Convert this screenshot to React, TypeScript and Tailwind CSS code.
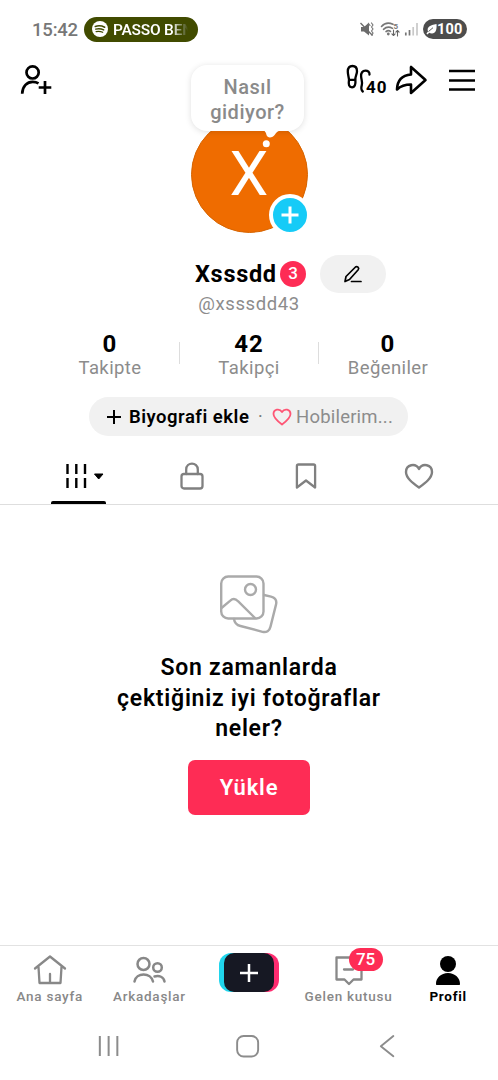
import React from "react";

const stroke = {
  fill: "none",
  stroke: "currentColor",
  strokeLinecap: "round" as const,
  strokeLinejoin: "round" as const,
};

function StatusBar() {
  return (
    <div className="flex h-[58px] shrink-0 items-center justify-between pr-[31px] pl-[32px]">
      <div className="flex items-center">
        <span className="w-[52px] pt-[2px] text-[18.5px] leading-6 font-medium tracking-[-.2px] whitespace-nowrap text-[#777]">15:42</span>
        <div className="flex h-[25px] w-[114px] items-center rounded-full bg-[#414b00] pl-[8px]">
          <svg width="16" height="16" viewBox="0 0 16 16" className="shrink-0">
            <circle cx="8" cy="8" r="8" fill="#fff" />
            <g fill="none" stroke="#414b00" strokeLinecap="round">
              <path d="M3.3 5.4c3.3-1 6.600-.6 9.400.8" strokeWidth="1.6" />
              <path d="M3.700 8.100c2.900-.8 5.600-.4 8 .8" strokeWidth="1.4" />
              <path d="M4.100 10.600c2.400-.6 4.600-.3 6.600.7" strokeWidth="1.2" />
            </g>
          </svg>
          <span className="ml-[5px] w-[75px] overflow-hidden bg-linear-to-r from-white from-78% to-[#414b00] bg-clip-text pt-px text-[15.500px] leading-5 font-semibold tracking-[-.25px] whitespace-nowrap text-transparent">
            PASSO BEN
          </span>
        </div>
      </div>
      <div className="flex items-center">
        <svg width="60" height="20" viewBox="0 0 60 20" className="mr-[4px]">
          <path d="M2 8h3l5-4.500v13L5 12.500H2z" fill="#6b6b6b" />
          <path d="M1.500 4l12 12.500" stroke="#6b6b6b" strokeWidth="1.300" />
          <path d="M12.500 4l1.500 2-1.500 2 1.500 2-1.500 2 1.500 2-1 2M9.500 4.500l1.500 2" {...stroke} stroke="#777" strokeWidth="1.200" />
          <path d="M22.500 7.500c3-3.500 7.500-4 11.500-2.200M24.500 10.300c2.600-2.500 6-2.800 9-.9M27 12.600c1.400-1.200 3.200-1.200 4.500-.2" {...stroke} stroke="#777" strokeWidth="1.600" />
          <circle cx="29.300" cy="15" r="1.400" fill="#777" />
          <text x="34.500" y="9.500" fill="#777" className="text-[8px] font-bold">5</text>
          <path d="M34.500 11v5.500m-1.600-1.700l1.600 1.700 1.600-1.700M38.500 17v-5.500m-1.600 1.700l1.600-1.700 1.600 1.700" {...stroke} stroke="#666" strokeWidth="1.100" />
          <path d="M46.800 13.500v3M50.500 11v5.500" stroke="#777" strokeWidth="1.700" />
          <path d="M54.200 8v8.500M58 4v12.500" stroke="#c8c8c8" strokeWidth="1.700" />
        </svg>
        <div className="flex h-[20px] w-[44px] items-center rounded-full bg-[#4d4d4d] pl-[3px]">
          <svg width="11" height="12" viewBox="0 0 11 12" className="shrink-0">
            <path d="M10.500 1c.5 6-1 9.300-4.500 9.500-1.300 0-2.200-.3-2.800-.8L1.500 11.500.4 10.500 2 8.600C.6 4 4 2 10.500 1z" fill="#fff" />
            <path d="M2.500 8.500L7 4.700" stroke="#4d4d4d" strokeWidth=".9" />
          </svg>
          <span className="pt-[2px] text-[14.500px] leading-5 font-bold tracking-[.2px] text-white">100</span>
        </div>
      </div>
    </div>
  );
}

function Header() {
  return (
    <header className="flex h-[197px] shrink-0 items-start justify-between">
      <div className="w-[191px] pt-[6px] pl-[20px]">
        <svg width="34" height="32" viewBox="0 0 34 32" {...stroke} strokeWidth="2.700" strokeLinecap="butt">
          <circle cx="12.600" cy="8.400" r="6.100" />
          <path d="M2.200 29.700c.2-7.800 5-11.800 10.500-11.800 2.500 0 4.300.6 5.800 1.500M25 17v13M18.700 23.500h12.600" />
        </svg>
      </div>
      <div className="relative mt-[58px] h-[117px] w-[117px] shrink-0">
        <div className="flex h-[117px] w-[117px] items-center justify-center rounded-full border border-[#d66400] bg-[#ef6c00]">
          <svg width="117" height="117" viewBox="0 0 117 117">
            <text x="58" y="79" textAnchor="middle" fill="#fff" className="font-[Roboto] text-[63px]">X</text>
          </svg>
        </div>
        <div className="absolute top-[-51px] left-0 flex h-[66px] w-[113px] items-center justify-center rounded-[16px] bg-white pt-[3px] text-center text-[20px] leading-[25px] font-medium tracking-[.5px] text-[#8a8a8a] shadow-[0_1px_6px_rgba(0,0,0,.13)]">
          Nasıl<br />gidiyor?
        </div>
        <svg className="absolute top-[14px] left-[70px]" width="24" height="18" viewBox="0 0 24 18" fill="#fff">
          <path d="M2 0h20c-5 1-6 1.500-8 4.500-2.300 3.500-7.500 4-8.500.5C5 2.500 4.500 1.500 2 0z" />
          <circle cx="5.300" cy="13.700" r="3.500" />
        </svg>
        <div className="absolute top-[78px] left-[78px] flex h-[42px] w-[42px] items-center justify-center rounded-full border-[4px] border-white bg-[#16cbf7]">
          <svg width="20" height="20" viewBox="0 0 20 20">
            <path d="M10 1.500v17M1.500 10h17" stroke="#fff" strokeWidth="3" />
          </svg>
        </div>
      </div>
      <div className="flex w-[190px] items-center pt-[6px] pl-[37px]">
        <svg width="44" height="32" viewBox="0 0 44 32" {...stroke} strokeWidth="2.300">
          <path d="M4 15.500C3.500 12 2.800 10 2.800 7.600c0-3.500 2-5.600 4.700-5.600s4.500 2.100 4.500 5.200c0 3.500-2 5-1.600 8.800.3 4-.4 7.300-3.400 7.300S3.300 21 4 15.500zM4.300 15.800h6" />
          <path d="M24.500 10.500c.2-2.300-1.600-3.900-4-3.900-3 0-4.700 2.300-4.400 5.800.3 3.800 1.600 5.700.7 8.700-.8 2.700-.3 5.300 1 6.400" />
          <text x="21" y="29" fill="currentColor" stroke="none" className="text-[17px] font-bold" textLength="20.500">40</text>
        </svg>
        <svg width="34" height="32" viewBox="0 0 34 32" className="ml-[6px]" fill="none" stroke="currentColor" strokeWidth="2.600" strokeLinejoin="round">
          <path d="M16 3v7.500C6.500 11.500 2.200 16.500 2 25.500c4-3.800 8-5 14-5v8.500l14.500-13z" />
        </svg>
        <svg width="28" height="24" viewBox="0 0 28 24" className="ml-[19px]">
          <path d="M1 3h26M1 12.500h26M1 21.500h26" stroke="currentColor" strokeWidth="2.500" />
        </svg>
      </div>
    </header>
  );
}

function Stat({ value, label }: { value: string; label: string }) {
  return (
    <div className="flex w-[139px] flex-col items-center">
      <span className="text-[24px] leading-[26px] font-bold tracking-[1px]">{value}</span>
      <span className="text-[18.500px] leading-[23px] tracking-[.4px] text-[#8c8c8c]">{label}</span>
    </div>
  );
}

function Profile() {
  return (
    <section className="shrink-0">
      <div className="flex h-[38px] items-center pl-[195px]">
        <span className="w-[85px] pt-[2px] text-[23.500px] font-bold tracking-[.7px]">Xsssdd</span>
        <span className="flex h-[26px] w-[26px] items-center justify-center rounded-full bg-[#fe2c55] text-[17px] font-medium text-white">3</span>
        <button className="ml-[14px] flex h-[38px] w-[66px] items-center justify-center rounded-full bg-[#f1f1f1]">
          <svg width="20" height="20" viewBox="0 0 20 20" {...stroke} strokeWidth="1.700">
            <path d="M2 17.500l1-5L12.500 3c1.500-1.300 4.200.8 2.700 2.700L6.500 15.500zM8.500 17.500h9.500" />
          </svg>
        </button>
      </div>
      <p className="h-[38px] pt-px text-center text-[18.500px] leading-[21px] tracking-[.6px] text-[#8c8c8c]">@xsssdd43</p>
      <div className="-ml-px flex h-[66px] items-start justify-center pl-px">
        <Stat value="0" label="Takipte" />
        <i className="-ml-px mt-[11px] h-[22px] w-px bg-[#ddd]" />
        <Stat value="42" label="Takipçi" />
        <i className="-ml-px mt-[11px] h-[22px] w-px bg-[#ddd]" />
        <Stat value="0" label="Beğeniler" />
      </div>
      <div className="ml-[89px] flex h-[39px] w-[319px] items-center rounded-full bg-[#f1f1f1] pl-[17px] whitespace-nowrap">
        <svg width="16" height="16" viewBox="0 0 16 16">
          <path d="M8 1v14M1 8h14" stroke="currentColor" strokeWidth="2" />
        </svg>
        <span className="ml-[7px] w-[121px] pt-[2px] text-[18.500px] font-semibold tracking-[.5px]">Biyografi ekle</span>
        <span className="ml-[8px] w-[14px] text-[18px] text-[#777]">·</span>
        <svg width="20" height="18" viewBox="0 0 20 18" {...stroke} stroke="#fe5675" strokeWidth="1.800">
          <path d="M10 16.500C6 13.500 1.500 10 1.500 6c0-4.800 6-6 8.500-2 2.500-4 8.500-2.800 8.500 2 0 4-4.500 7.500-8.500 10.500z" />
        </svg>
        <span className="ml-[4px] pt-[2px] text-[18.500px] tracking-[.2px] text-[#8c8c8c]">Hobilerim...</span>
      </div>
    </section>
  );
}

function Tabs() {
  return (
    <nav className="flex h-[69px] shrink-0 border-b border-[#dedede] px-[22px] text-[#808080]">
      <div className="relative flex flex-1 justify-center pt-[26px] text-black">
        <svg width="40" height="28" viewBox="0 0 40 28" className="ml-[12px]">
          <path d="M2.500 2v10M11.300 2v10M20 2v10M2.500 16v10M11.300 16v10M20 16v10" stroke="currentColor" strokeWidth="2.400" />
          <path d="M29.500 12h8.500l-4.300 5z" fill="currentColor" stroke="currentColor" strokeLinejoin="round" />
        </svg>
        <i className="absolute bottom-0 left-[29px] h-[3px] w-[55px] rounded-t-[2px] bg-black" />
      </div>
      <div className="flex flex-1 justify-center pt-[25px]">
        <svg width="26" height="30" viewBox="0 0 26 30" {...stroke} strokeWidth="2.300">
          <rect x="2.500" y="13" width="21" height="14.500" rx="2.500" />
          <path d="M7.200 13V8.500c0-7.800 11.600-7.800 11.600 0V13" />
        </svg>
      </div>
      <div className="flex flex-1 justify-center pt-[27px]">
        <svg width="22" height="28" viewBox="0 0 22 28" {...stroke} strokeWidth="2.300">
          <path d="M1.900 3c0-1 .5-1.500 1.500-1.500h15.200c1 0 1.500.5 1.500 1.500v21.500L11 17.500l-9.100 7z" />
        </svg>
      </div>
      <div className="flex flex-1 justify-center pt-[27px]">
        <svg width="30" height="27" viewBox="0 0 30 27" {...stroke} strokeWidth="2.400">
          <path d="M15 24.500C8.500 19.800 2 15 2 9c0-7.500 9.500-9.500 13-3 3.500-6.500 13-4.500 13 3 0 6-6.500 10.800-13 15.500z" />
        </svg>
      </div>
    </nav>
  );
}

function EmptyState() {
  return (
    <main className="flex h-[440px] shrink-0 flex-col items-center pt-[69px]">
      <svg width="60" height="62" viewBox="0 0 60 62" {...stroke} stroke="#aaa" strokeWidth="2.400">
        <rect x="2.200" y="2.500" width="42.300" height="42" rx="7" />
        <circle cx="31.500" cy="15.500" r="5.500" />
        <path d="M2.500 34l8.500-7.200c3-2.700 5.500-2.300 8 .4L36 44" />
        <path d="M45 21l7 1.600c4 1 6 4 5 8l-5.500 22c-1 4.300-4 6.200-8 5.200L21.500 52c-4-1-6-3.300-6.500-7" />
      </svg>
      <h2 className="mt-[17px] text-center text-[23px] leading-[30.500px] font-semibold tracking-[.75px]">
        Son zamanlarda<br />çektiğiniz iyi fotoğraflar<br />neler?
      </h2>
      <button className="mt-[15px] h-[55px] w-[122px] rounded-[7px] bg-[#fe2c55] text-[22px] font-semibold tracking-[.8px] text-white">
        Yükle
      </button>
    </main>
  );
}

function NavItem({ label, active, children }: { label: string; active?: boolean; children: React.ReactNode }) {
  return (
    <div className={active ? "flex flex-1 flex-col items-center font-bold text-black" : "flex flex-1 flex-col items-center font-medium text-[#888]"}>
      <div className="relative flex h-[41px] items-start pt-[8px]">{children}</div>
      <span className="text-[13.500px] leading-[18px] tracking-[.75px] whitespace-nowrap">{label}</span>
    </div>
  );
}

function BottomNav() {
  return (
    <nav className="flex h-[67px] shrink-0 border-t border-[#e2e2e2]">
      <NavItem label="Ana sayfa">
        <svg width="34" height="32" viewBox="0 0 34 32" {...stroke} strokeWidth="2.300">
          <path d="M2 14.500L17 2.500l15 12M5.500 13l1 16h21l1-16M17 20v9" />
        </svg>
      </NavItem>
      <NavItem label="Arkadaşlar">
        <svg width="34" height="32" viewBox="0 0 34 32" {...stroke} strokeWidth="2.500">
          <circle cx="11.500" cy="10" r="6" />
          <circle cx="25.500" cy="13.500" r="4.300" />
          <path d="M2.500 27.500c1.500-9.500 16.500-9.500 18.500 0M22.500 22.500c4.800-1.500 9.200.5 10 5" />
        </svg>
      </NavItem>
      <div className="flex flex-1 justify-center pt-[7px]">
        <div className="flex h-[39px] w-[60px] rounded-[12px] bg-linear-to-r from-[#20d5ec] from-50% to-[#fe2c70] to-50% px-[5px]">
          <div className="flex flex-1 items-center justify-center rounded-[10px] bg-[#161823]">
            <svg width="20" height="20" viewBox="0 0 20 20">
              <path d="M10 1v18M1 10h18" stroke="#fff" strokeWidth="2.500" />
            </svg>
          </div>
        </div>
      </div>
      <NavItem label="Gelen kutusu">
        <svg width="30" height="32" viewBox="0 0 30 32" {...stroke} strokeWidth="2.300">
          <path d="M2.500 3.500h25v22h-8L15 30l-4.500-4.500h-8zM10 15.500h9" />
        </svg>
        <span className="absolute top-[2px] left-[15px] flex h-[23px] w-[34px] items-center justify-center rounded-full bg-[#fe2c55] text-[17px] text-white">75</span>
      </NavItem>
      <NavItem label="Profil" active>
        <svg width="28" height="32" viewBox="0 0 28 32" fill="currentColor">
          <circle cx="14" cy="10" r="8" />
          <path d="M2 30c-.2-6 5-11 12-11s12.200 5 12 11c0 .6-.3 1-1 1H3c-.7 0-1-.4-1-1z" />
        </svg>
      </NavItem>
    </nav>
  );
}

function SystemNav() {
  return (
    <div className="flex h-[68px] shrink-0 items-center px-[38px] text-[#8c8c8c]">
      <svg width="140" height="24" viewBox="0 0 140 24" className="flex-1">
        <path d="M61.500 2v20M70.300 2v20M79 2v20" stroke="currentColor" strokeWidth="2" />
      </svg>
      <svg width="140" height="24" viewBox="0 0 140 24" className="flex-1" {...stroke} strokeWidth="1.900">
        <rect x="57.800" y="2" width="21" height="20.500" rx="6.500" />
      </svg>
      <svg width="140" height="24" viewBox="0 0 140 24" className="flex-1" {...stroke} strokeWidth="1.900">
        <path d="M74 2L61.500 12.200l12.500 10" />
      </svg>
    </div>
  );
}

export default function App() {
  return (
    <div className="flex h-[1080px] w-[498px] flex-col overflow-hidden bg-white font-[Roboto,sans-serif] text-black">
      <StatusBar />
      <Header />
      <Profile />
      <Tabs />
      <EmptyState />
      <BottomNav />
      <SystemNav />
    </div>
  );
}
